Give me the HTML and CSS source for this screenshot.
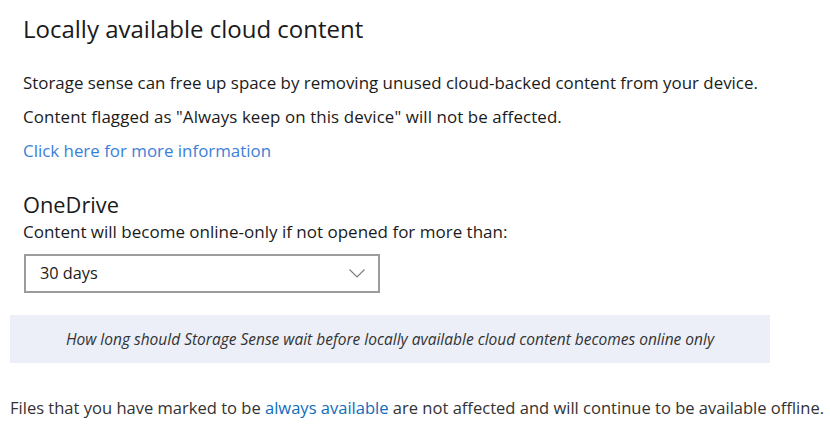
FILE: index.html
```html
<!DOCTYPE html>
<html>
<head>
<meta charset="utf-8">
<link rel="stylesheet" href="styles.css">
</head>
<body>
<div class="page">
  <div class="section">
    <h1 class="title">Locally available cloud content</h1>
    <p class="line">Storage sense can free up space by removing unused cloud-backed content from your device.</p>
    <p class="line">Content flagged as "Always keep on this device" will not be affected.</p>
    <p class="line"><a class="link" href="#">Click here for more information</a></p>
    <h2 class="subtitle">OneDrive</h2>
    <p class="label">Content will become online-only if not opened for more than:</p>
    <div class="select">
      <span class="select-value">30 days</span>
      <svg class="chevron" width="16" height="9" viewBox="0 0 16 9"><path d="M0.5 0.5 L8 8 L15.5 0.5" fill="none" stroke="#7a7a7a" stroke-width="1.1"/></svg>
    </div>
  </div>
  <div class="caption">How long should Storage Sense wait before locally available cloud content becomes online only</div>
  <p class="footer">Files that you have marked to be <a class="link2" href="#">always available</a> are not affected and will continue to be available offline.</p>
</div>
</body>
</html>
```
FILE: styles.css
```css
html, body { margin: 0; padding: 0; background: #fff; }
body { font-family: "Open Sans", "Noto Sans", sans-serif; color: #1b1b1b; width: 830px; height: 435px; overflow: hidden; }
.page { padding-top: 14px; }
.section { padding-left: 23px; }
.title { font-size: 24px; font-weight: 400; line-height: 30px; margin: 0 0 22px; color: #1a1a1a; }
.line { font-size: 16.9px; line-height: 34px; margin: 0; }
.line:nth-child(3) { letter-spacing: 0.1px; }
.link { color: #3c7fd8; text-decoration: none; }
.subtitle { font-size: 21.8px; font-weight: 400; line-height: 26px; margin: 24px 0 3px; color: #1a1a1a; }
.label { font-size: 17px; line-height: 22px; margin: 0 0 10.5px; }
.select { box-sizing: border-box; width: 356px; height: 39px; border: 2px solid #9c9c9c; display: flex; align-items: center; justify-content: space-between; padding: 0 13px 0 14px; margin-left: 1px; }
.select-value { font-size: 16.3px; }
.chevron { display: block; }
.caption { box-sizing: border-box; margin: 22px 0 0 10px; width: 760px; height: 48px; background: #eceff7; display: flex; align-items: center; justify-content: center; font-style: italic; font-size: 15.5px; color: #333; }
.footer { margin: 34.6px 0 0 10px; font-size: 16.55px; line-height: 22px; color: #333; }
.link2 { color: #0f6cbd; text-decoration: none; }
```
